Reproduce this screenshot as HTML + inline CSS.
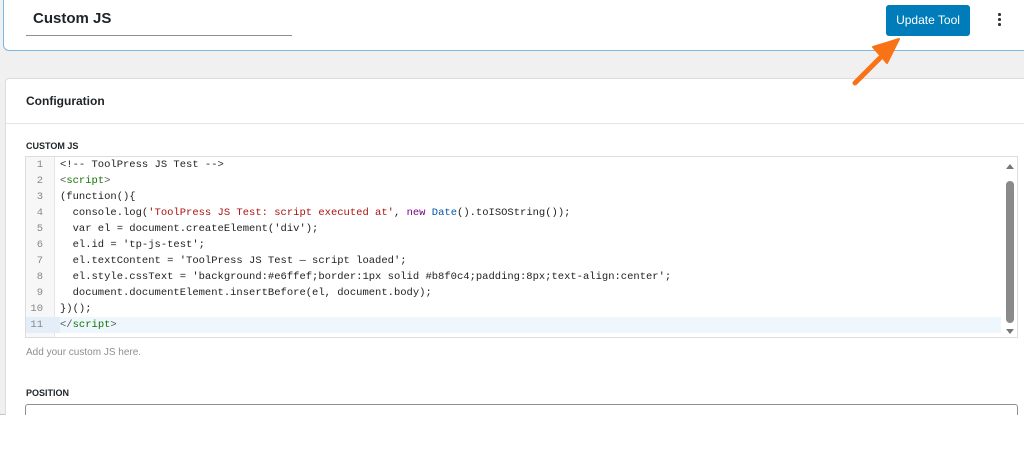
<!DOCTYPE html>
<html><head><style>
body{margin:0;width:1024px;height:469px;background:#fff;position:relative;overflow:hidden;font-family:"Liberation Sans",sans-serif;}
.bg{position:absolute;left:0;top:0;width:1024px;height:414px;background:#f0f0f1;border-bottom:1px solid #c3c4c7;}
.top{position:absolute;left:3px;top:-5px;width:1030px;height:54px;background:#fff;border:1.5px solid #7fb4dc;border-radius:6px;}
.title{position:absolute;left:33px;top:10px;font-size:15px;font-weight:bold;color:#1d2327;}
.uline{position:absolute;left:26px;top:35px;width:266px;height:1px;background:#8c8f94;}
.btn{position:absolute;left:886px;top:5px;width:84px;height:31px;background:#007cba;border-radius:3px;color:#fff;font-size:12px;line-height:31px;text-align:center;}
.dots{position:absolute;left:998px;top:13px;}
.dots i{display:block;width:2.5px;height:2.5px;background:#333;border-radius:50%;margin-bottom:2.5px;}
.card{position:absolute;left:5px;top:78px;width:1030px;height:345px;background:#fff;border:1px solid #dcdcde;border-radius:4px;}
.ch{position:absolute;left:26px;top:94px;font-size:12px;font-weight:bold;color:#1d2327;}
.sep{position:absolute;left:6px;top:123px;width:1018px;height:1px;background:#e5e5e5;}
.lbl{position:absolute;left:26px;font-size:9px;font-weight:bold;color:#1d2327;}
.ed{position:absolute;left:25px;top:156px;width:991px;height:180px;border:1px solid #ddd;background:#fff;}
.gut{position:absolute;left:0;top:0;width:28px;height:180px;background:#f7f7f7;border-right:1px solid #e5e5e5;}
.lines{position:absolute;left:0;top:0;font-family:"Liberation Mono",monospace;font-size:10.5px;line-height:16px;white-space:pre;color:#222;}
.ln{display:block;height:16px;}
.ln .n{display:inline-block;width:17px;text-align:right;color:#888;padding-right:17px;}
.act{background:#eef7fd;width:975px;}
.act .n{background:#e4eef8;}
.s{color:#a11;}.k{color:#708;}.t{color:#170;}.b{color:#555;}.v{color:#05a;}
.sb{position:absolute;right:3px;top:24px;width:8px;height:142px;background:#8a8a8a;border-radius:4px;}
.help{position:absolute;left:26px;top:347px;font-size:10px;color:#8c8f94;}
.sel{position:absolute;left:25px;top:404px;width:991px;height:20px;border:1px solid #8c8f94;border-radius:3px;background:#fff;}
</style></head><body>
<div class="bg"></div>
<div class="top"></div>
<div class="title">Custom JS</div>
<div class="uline"></div>
<div class="btn">Update Tool</div>
<div class="dots"><i></i><i></i><i></i></div>
<div class="card"></div>
<div class="ch">Configuration</div>
<div class="sep"></div>
<div class="lbl" style="top:141px">CUSTOM JS</div>
<div class="ed">
<div class="gut"></div>
<div class="lines"><span class="ln"><span class="n">1</span>&lt;!-- ToolPress JS Test --&gt;</span><span class="ln"><span class="n">2</span><span class="b">&lt;</span><span class="t">script</span><span class="b">&gt;</span></span><span class="ln"><span class="n">3</span>(function(){</span><span class="ln"><span class="n">4</span>  console.log(<span class="s">'ToolPress JS Test: script executed at'</span>, <span class="k">new</span> <span class="v">Date</span>().toISOString());</span><span class="ln"><span class="n">5</span>  var el = document.createElement('div');</span><span class="ln"><span class="n">6</span>  el.id = 'tp-js-test';</span><span class="ln"><span class="n">7</span>  el.textContent = 'ToolPress JS Test — script loaded';</span><span class="ln"><span class="n">8</span>  el.style.cssText = 'background:#e6ffef;border:1px solid #b8f0c4;padding:8px;text-align:center';</span><span class="ln"><span class="n">9</span>  document.documentElement.insertBefore(el, document.body);</span><span class="ln"><span class="n">10</span>})();</span><span class="ln act"><span class="n">11</span><span class="b">&lt;/</span><span class="t">script</span><span class="b">&gt;</span></span></div>
<div class="sb"></div>
<svg style="position:absolute;right:2px;top:6px" width="10" height="174"><path d="M1 6 L5 1 L9 6Z" fill="#777"/><path d="M1 166 L5 171 L9 166Z" fill="#777"/></svg>
</div>
<div class="help">Add your custom JS here.</div>
<div class="lbl" style="top:388px">POSITION</div>
<div class="sel"></div>
<div style="position:absolute;left:0;top:415px;width:1024px;height:54px;background:#fff"></div>
<svg style="position:absolute;left:0;top:0" width="1024" height="469"><path d="M855 83 L880 58" stroke="#f97316" stroke-width="5" stroke-linecap="round"/><path d="M899 39 L873 47 L887 63Z" fill="#f97316" stroke="#f97316" stroke-width="2" stroke-linejoin="round"/></svg>
</body></html>
